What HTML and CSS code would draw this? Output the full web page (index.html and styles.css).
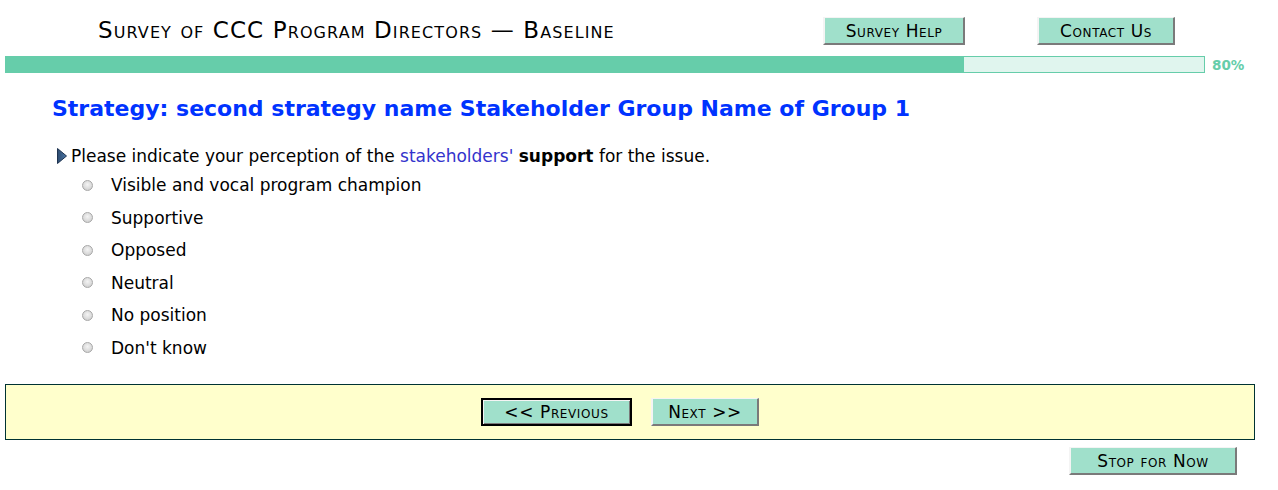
FILE: index.html
```html
<!DOCTYPE html>
<html>
<head>
<meta charset="utf-8">
<link rel="stylesheet" href="styles.css">
</head>
<body>
<div class="page">
  <header class="top">
    <h1 class="title">Survey of CCC Program Directors — Baseline</h1>
    <button class="btn help">Survey Help</button>
    <button class="btn contact">Contact Us</button>
  </header>
  <div class="progress">
    <div class="track"><div class="fill" style="width:80%"></div></div>
    <span class="pct">80%</span>
  </div>
  <h2 class="strategy">Strategy: second strategy name Stakeholder Group Name of Group 1</h2>
  <div class="question"><svg class="arrow" width="10" height="16" viewBox="0 0 10 16"><defs><linearGradient id="g" x1="0" y1="0" x2="1" y2="0"><stop offset="0" stop-color="#2c4a6e"/><stop offset="1" stop-color="#4d78a8"/></linearGradient></defs><polygon points="0.5,0.5 9.5,8 0.5,15.5" fill="url(#g)" stroke="#1f3350" stroke-width="1"/></svg><span class="qtext">Please indicate your perception of the <span class="term">stakeholders'</span> <b>support</b> for the issue.</span></div>
  <ul class="options">
    <li><span class="radio"></span>Visible and vocal program champion</li>
    <li><span class="radio"></span>Supportive</li>
    <li><span class="radio"></span>Opposed</li>
    <li><span class="radio"></span>Neutral</li>
    <li><span class="radio"></span>No position</li>
    <li><span class="radio"></span>Don't know</li>
  </ul>
  <div class="nav">
    <button class="btn prev">&lt;&lt; Previous</button>
    <button class="btn next">Next &gt;&gt;</button>
  </div>
  <div class="stop-row">
    <button class="btn stop">Stop for Now</button>
  </div>
</div>
</body>
</html>
```

FILE: styles.css
```css
html, body {
  margin: 0;
  padding: 0;
  background: #ffffff;
}
.page {
  width: 1250px;
  padding: 0 5px;
  font-family: "DejaVu Sans", Verdana, sans-serif;
  color: #000;
}
.top {
  display: flex;
  align-items: center;
  height: 56px;
}
.title {
  margin: 0 0 0 93px;
  font-family: "DejaVu Sans", Tahoma, sans-serif;
  font-variant: small-caps;
  font-weight: normal;
  font-size: 23px;
  letter-spacing: 1.1px;
  width: 725px;
  padding-top: 4px;
  white-space: nowrap;
}
.btn {
  font-family: "DejaVu Sans", Tahoma, sans-serif;
  font-variant: small-caps;
  font-size: 17px;
  letter-spacing: 0.6px;
  color: #000;
  background: #a0e0cb;
  border-style: solid;
  border-width: 1px 2px 2px 2px;
  border-color: #f4f4f4 #7a7a7a #7a7a7a #f4f4f4;
  padding: 0;
  height: 28px;
  cursor: pointer;
}
.top .btn { margin-top: 6px; }
.help { width: 142px; }
.contact { width: 138px; margin-left: 72px; }
.progress {
  display: flex;
  align-items: center;
  height: 17px;
}
.track {
  width: 1200px;
  height: 17px;
  box-sizing: border-box;
  border: 1px solid #66cdaa;
  background: #e0f5ee;
}
.fill {
  height: 100%;
  background: #66cdaa;
}
.pct {
  margin-left: 7px;
  font-size: 13.5px;
  font-weight: bold;
  color: #66cdaa;
}
.strategy {
  margin: 23px 0 0 47px;
  font-size: 22px;
  font-weight: bold;
  color: #0033ff;
  line-height: 26px;
}
.question {
  margin: 24px 0 0 52px;
  font-size: 17px;
  line-height: 20px;
  display: flex;
  align-items: center;
}
.arrow { margin-right: 4px; flex: none; }
.term { color: #3333cc; }
.options {
  list-style: none;
  margin: 0;
  padding: 3px 0 0 77px;
  font-size: 17px;
}
.options li {
  display: flex;
  align-items: center;
  height: 32.5px;
}
.radio {
  width: 11px;
  height: 11px;
  box-sizing: border-box;
  border-radius: 50%;
  border: 1px solid #a8a8a8;
  background: radial-gradient(circle at 50% 40%, #f4f4f4 0, #dcdcdc 55%, #c4c4c4 100%);
  margin-right: 18px;
}
.nav {
  margin-top: 20px;
  height: 54px;
  border: 1px solid #003333;
  background: #ffffcc;
  display: flex;
  align-items: center;
  gap: 19px;
  padding-left: 475px;
}
.prev {
  width: 151px;
  border: 2px solid #000;
  box-shadow: inset 1px 1px 0 #f4f4f4, inset -1px -1px 0 #7a7a7a;
}
.next { width: 108px; }
.stop-row {
  display: flex;
  justify-content: flex-end;
  padding: 7px 18px 0 0;
}
.stop { width: 168px; }
```
